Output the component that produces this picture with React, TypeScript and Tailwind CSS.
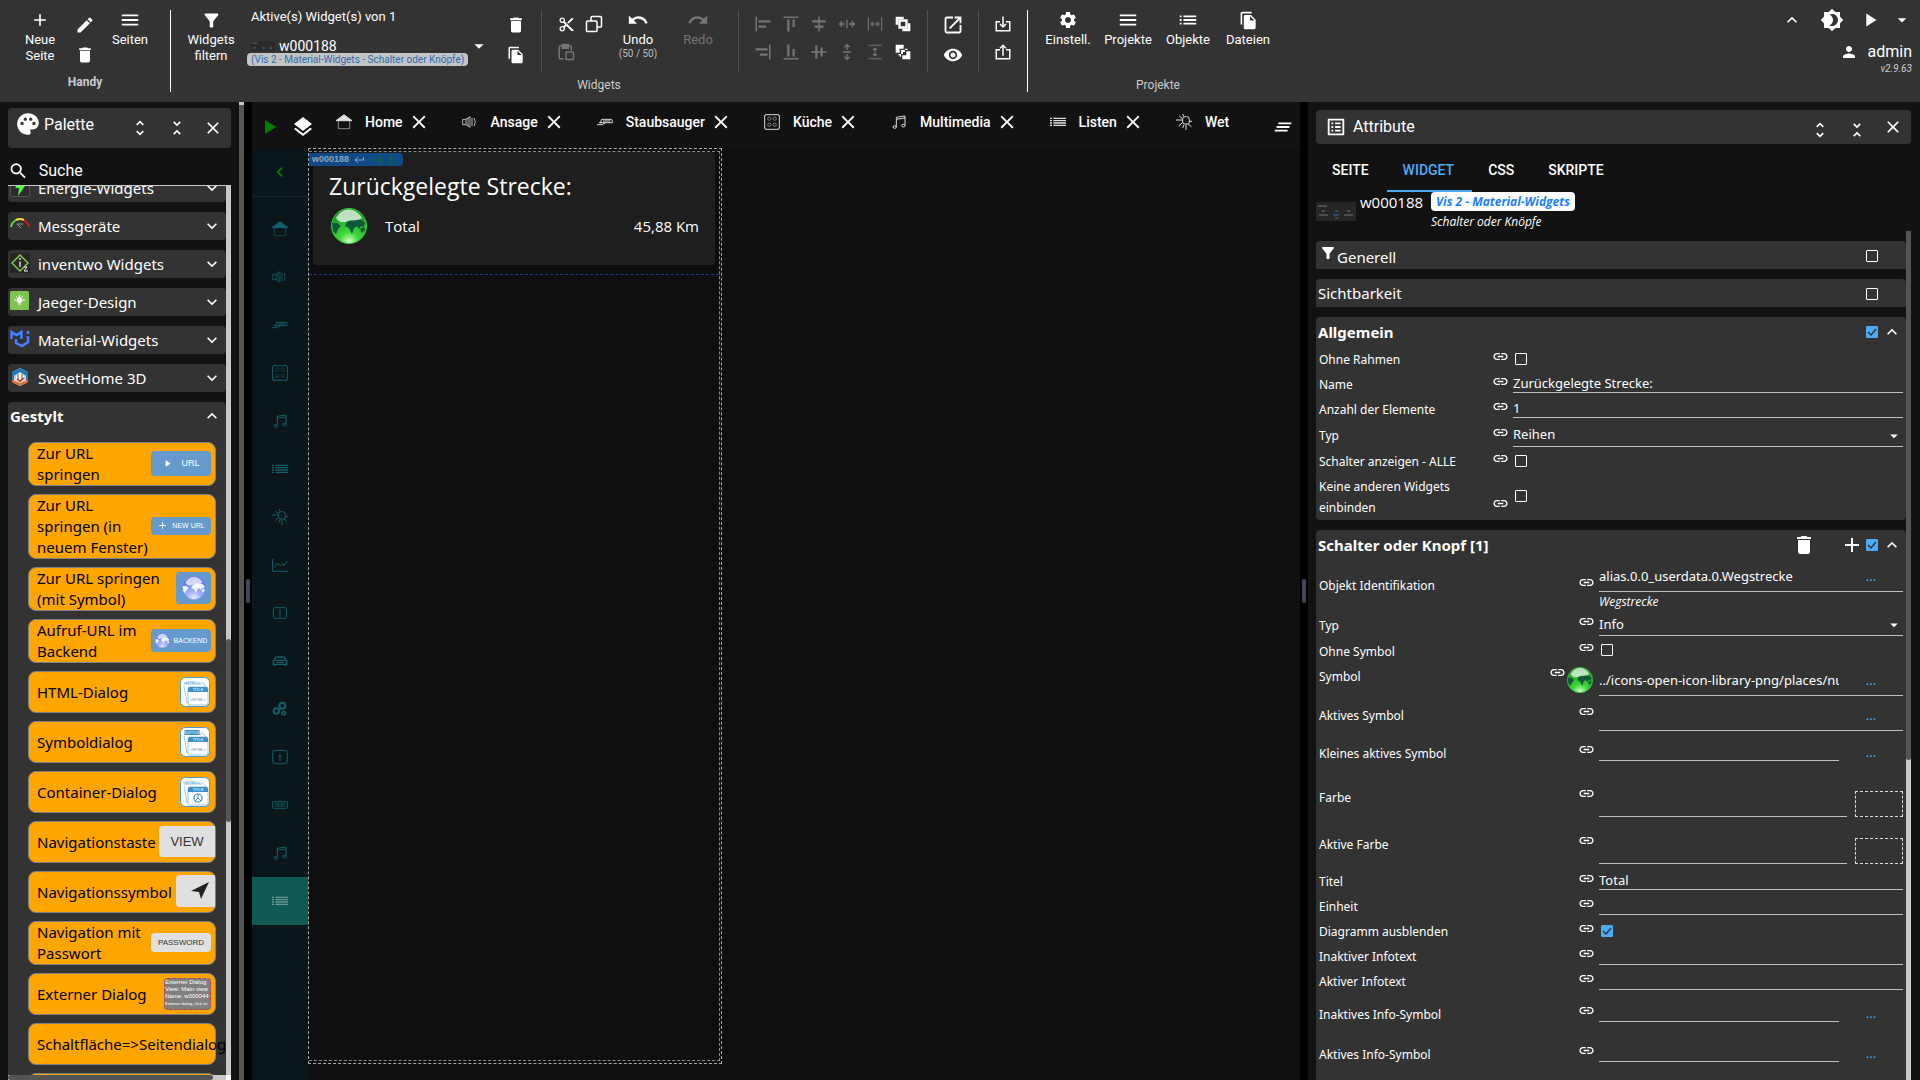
import { useId, type ReactNode } from "react";
import clsx from "clsx";
import {
  MdAdd,
  MdAlignHorizontalCenter,
  MdAlignHorizontalLeft,
  MdAlignHorizontalRight,
  MdAlignVerticalBottom,
  MdAlignVerticalCenter,
  MdAlignVerticalTop,
  MdArrowDropDown,
  MdBrightness4,
  MdClearAll,
  MdClose,
  MdContentCut,
  MdDelete,
  MdEdit,
  MdExpandLess,
  MdExpandMore,
  MdFileCopy,
  MdFilterAlt,
  MdLayers,
  MdLink,
  MdList,
  MdListAlt,
  MdMenu,
  MdNavigateBefore,
  MdPalette,
  MdPerson,
  MdPlayArrow,
  MdRedo,
  MdSearch,
  MdSettings,
  MdUndo,
  MdUnfoldLess,
  MdUnfoldMore,
  MdVisibility,
} from "react-icons/md";

/* ---------- Icons ---------- */

type LineIconProps = { children: ReactNode; size?: number; width?: number };

function LineIcon({ children, size = 18, width = 2 }: LineIconProps) {
  return (
    <svg width={size} height={size} viewBox="0 0 24 24" fill="none" stroke="currentColor" strokeWidth={width}>
      {children}
    </svg>
  );
}

const CopyIcon = () => (
  <LineIcon>
    <path d="M8 8V3.5A1.5 1.5 0 0 1 9.500 2H20.500A1.500 1.500 0 0 1 22 3.500V14.500A1.500 1.500 0 0 1 20.500 16H16" />
    <rect x="2" y="8" width="14" height="14" rx="1.500" />
  </LineIcon>
);

const PasteIcon = () => (
  <LineIcon>
    <path d="M9 21H4a1 1 0 0 1-1-1V5a1 1 0 0 1 1-1h14a1 1 0 0 1 1 1v5" />
    <path d="M7 2h8v5H7z" fill="currentColor" />
    <rect x="12" y="12" width="10" height="10" rx="1" />
  </LineIcon>
);

const SpreadHIcon = () => (
  <LineIcon size={16}>
    <path d="M9 12H2M15 12h7M5 8l-4 4 4 4M19 8l4 4-4 4M12 6v12" />
  </LineIcon>
);

const SpreadVIcon = () => (
  <LineIcon size={16}>
    <path d="M12 9V2M12 15v7M8 5l4-4 4 4M8 19l4 4 4-4M6 12h12" />
  </LineIcon>
);

const WidthIcon = () => (
  <LineIcon size={16} width={1.6}>
    <path d="M2 2v20M22 2v20M6 12h12M9 9l-3 3 3 3M15 9l3 3-3 3" />
  </LineIcon>
);

const HeightIcon = () => (
  <LineIcon size={16} width={1.6}>
    <path d="M2 2h20M2 22h20M12 6v12M9 9l3-3 3 3M9 15l3 3 3-3" />
  </LineIcon>
);

const FrontIcon = () => (
  <svg width="16" height="16" viewBox="0 0 24 24" fill="currentColor">
    <path d="M1 1h12v4H5v8H1zM23 23H11v-4h8v-8h4z" />
    <path d="M5 5h14v14H5zM8.500 8.500v7h7v-7z" fillRule="evenodd" />
  </svg>
);

const BackIcon = () => (
  <svg width="16" height="16" viewBox="0 0 24 24" fill="currentColor">
    <path d="M1 1h12v6H7v6H1zM23 23H11v-6h6v-6h6z" />
    <path d="M15 7h4v2h-4zM5 15h4v4H7v-2H5zM9 9h6v3h-3v3H9z" />
  </svg>
);

const OpenIcon = () => (
  <LineIcon size={20} width={2.2}>
    <path d="M12 3H4.500A1.500 1.500 0 0 0 3 4.500v15A1.500 1.500 0 0 0 4.500 21h15a1.500 1.500 0 0 0 1.500-1.500V12" />
    <path d="M14 3h7v7M21 3 8 16" />
  </LineIcon>
);

const ImportIcon = () => (
  <LineIcon>
    <path d="M8 9H3v12h18V9h-5M12 2v14M8 12l4 4 4-4" />
  </LineIcon>
);

const ExportIcon = () => (
  <LineIcon>
    <path d="M8 9H3v12h18V9h-5M12 17V3M8 7l4-4 4 4" />
  </LineIcon>
);

type GlyphName =
  | "home"
  | "speaker"
  | "vacuum"
  | "stove"
  | "music"
  | "list"
  | "weather"
  | "chart"
  | "window"
  | "car"
  | "gears"
  | "alert"
  | "cassette";

const glyphs: Record<GlyphName, ReactNode> = {
  home: (
    <>
      <path d="M0 10 12 1l12 9z" fill="currentColor" stroke="currentColor" />
      <path d="M3.500 10v12h17V10" opacity="0.600" />
    </>
  ),
  speaker: (
    <>
      <path d="M1 8h5v8H1zM6 8l6-4v16l-6-4M9 6v12" opacity="0.800" />
      <path d="M15 6v12M18 6q4 6 0 12" opacity="0.800" />
    </>
  ),
  vacuum: (
    <>
      <path d="M7 8h14q2 0 2 3v2H5zM0 16h8l5-3M3 13h5" />
      <path d="M9 10.500h11" />
    </>
  ),
  stove: (
    <>
      <rect x="1" y="1" width="22" height="22" rx="2" />
      <circle cx="8" cy="7" r="2.500" opacity="0.500" />
      <circle cx="16" cy="7" r="2.500" opacity="0.500" />
      <circle cx="8" cy="16" r="2.500" opacity="0.500" />
      <circle cx="16" cy="16" r="2.500" opacity="0.500" />
    </>
  ),
  music: (
    <>
      <path d="M8 19V5l13-2v14M8 8l13-2" />
      <ellipse cx="5.500" cy="19.500" rx="2.500" ry="2" />
      <ellipse cx="18.500" cy="17.500" rx="2.500" ry="2" />
    </>
  ),
  list: (
    <>
      <path d="M0 6.500h3M5 6.500h19M0 10h3M5 10h19M0 13.500h3M5 13.500h19M0 17h3M5 17h19" strokeWidth="2" />
    </>
  ),
  weather: (
    <>
      <path d="M10 7q0-3 4-3h2q4 0 4 4v4q0 3-3 3h-4q-3 0-3-3z" />
      <path d="M0 9h9M5 3l5 4M4 18l6-5M10 21l2-5M15 16v8M18 15l5 4M20 11h4M10 0l2 4" />
    </>
  ),
  chart: (
    <>
      <path d="M1 3v18.500h23M3 16l5-6 5 3 3-3 2 3 5-7" />
    </>
  ),
  window: (
    <>
      <rect x="2" y="4" width="20" height="16" rx="3" />
      <path d="M12 6v12" />
    </>
  ),
  car: (
    <>
      <path d="m3 11 3-5h12l3 5M2 11h20v6H2zM4 17v3M20 17v3M7 14h10" strokeWidth="2" />
    </>
  ),
  gears: (
    <>
      <circle cx="15.500" cy="7" r="4.500" strokeWidth="3" />
      <circle cx="6.500" cy="15" r="4" strokeWidth="3" />
      <circle cx="17.500" cy="18.500" r="2.500" strokeWidth="2.500" />
    </>
  ),
  alert: (
    <>
      <rect x="1" y="2" width="22" height="20" rx="4" />
      <path d="M12 8v5M12 15v2.500" strokeWidth="2.500" />
    </>
  ),
  cassette: (
    <>
      <rect x="1" y="7" width="22" height="10" rx="1" />
      <path d="M5 10h14v4H5z" opacity="0.600" />
      <path d="M8 12h2M14 12h2" strokeWidth="3" />
    </>
  ),
};

function Glyph({ name }: { name: GlyphName }) {
  return (
    <LineIcon size={16} width={1.5}>
      {glyphs[name]}
    </LineIcon>
  );
}

function Globe({ size, tone }: { size: number; tone: "green" | "blue" }) {
  const id = useId();
  const green = tone === "green";
  return (
    <svg width={size} height={size} viewBox="0 0 36 36" className="shrink-0">
      <defs>
        <radialGradient id={id} cx="50%" cy="95%" r="80%">
          <stop offset="0" stopColor={green ? "#d8ffc8" : "#eaf0ff"} />
          <stop offset="0.35" stopColor={green ? "#3fd63a" : "#a9b8ff"} />
          <stop offset="1" stopColor={green ? "#1f9a2c" : "#5a6ff0"} />
        </radialGradient>
      </defs>
      <circle cx="18" cy="18" r="17.500" fill={`url(#${id})`} stroke={green ? "#2fd02f" : "#7f95e8"} />
      <path
        d="M1 15l5 0 4 3-3 3-2 5-3-3zM16 14l5-3 9 1 4 3-2 4-2-1-2 3-2-3-3 2-2 6-3-6-4-2zM29 21l4-2 1 3-3 3z"
        fill={green ? "#0d5a3a" : "#f3f7ff"}
      />
      <path d="M5 10C9 3 14 1.500 18 1.500S28 4 31 10c-6 4-12 1-17 4-4 1-7-1-9-4z" fill="#fff" opacity="0.700" />
    </svg>
  );
}

/* ---------- Toolbar ---------- */

type ToolProps = { label: string; icon: ReactNode; children?: ReactNode; className?: string; disabled?: boolean };

function ToolButton({ label, icon, children, className, disabled }: ToolProps) {
  return (
    <button
      disabled={disabled}
      className={clsx("flex flex-col items-center self-start pt-2 text-[13px] leading-4 disabled:text-[#757575]", className)}
    >
      <span className="flex h-6 items-center">{icon}</span>
      <span>{label}</span>
      {children}
    </button>
  );
}

function IconButton({ label, children, className, disabled }: { label: string; children: ReactNode; className?: string; disabled?: boolean }) {
  return (
    <button aria-label={label} disabled={disabled} className={clsx("flex items-center justify-center disabled:text-[#757575]", className)}>
      {children}
    </button>
  );
}

const ThinDivider = () => <div className="mx-[10px] mt-[10px] h-[62px] w-px bg-[#505050]" />;
const StrongDivider = () => <div className="mt-[10px] h-[82px] w-px bg-white" />;

const alignTools = [
  { label: "Links ausrichten", icon: <MdAlignHorizontalLeft size={18} /> },
  { label: "Oben ausrichten", icon: <MdAlignVerticalTop size={18} /> },
  { label: "Horizontal zentrieren", icon: <MdAlignHorizontalCenter size={18} /> },
  { label: "Horizontal verteilen", icon: <SpreadHIcon /> },
  { label: "Gleiche Breite", icon: <WidthIcon /> },
  { label: "Nach vorne", icon: <FrontIcon />, active: true },
  { label: "Rechts ausrichten", icon: <MdAlignHorizontalRight size={18} /> },
  { label: "Unten ausrichten", icon: <MdAlignVerticalBottom size={18} /> },
  { label: "Vertikal zentrieren", icon: <MdAlignVerticalCenter size={18} /> },
  { label: "Vertikal verteilen", icon: <SpreadVIcon /> },
  { label: "Gleiche Höhe", icon: <HeightIcon /> },
  { label: "Nach hinten", icon: <BackIcon />, active: true },
];

function Toolbar() {
  return (
    <header className="flex h-[102px] shrink-0 bg-[#333333]">
      {/* View actions */}
      <div className="flex flex-col px-[14px]">
        <div className="flex h-[74px]">
          <ToolButton label="Neue" icon={<MdAdd size={20} />} className="w-[52px]">
            <span>Seite</span>
          </ToolButton>
          <div className="flex w-[38px] flex-col pt-[10px]">
            <IconButton label="Bearbeiten" className="h-[30px]"><MdEdit size={20} /></IconButton>
            <IconButton label="Löschen" className="h-[30px]"><MdDelete size={20} /></IconButton>
          </div>
          <ToolButton label="Seiten" icon={<MdMenu size={22} />} className="w-[52px]" />
        </div>
        <span className="text-center text-xs font-bold text-[#cccccc]">Handy</span>
      </div>
      <StrongDivider />

      {/* Widget actions */}
      <div className="flex flex-col">
        <div className="flex h-[77px]">
          <ToolButton label="Widgets" icon={<MdFilterAlt size={21} />} className="ml-[6px] w-[68px]">
            <span>filtern</span>
          </ToolButton>
          <div className="flex w-[246px] flex-col items-start pt-[9px]">
            <span className="ml-[6px] text-[13px] leading-4">Aktive(s) Widget(s) von 1</span>
            <button className="mt-[14px] flex w-full flex-col items-start">
              <span className="ml-[6px] flex h-[14px] w-[239px] items-center gap-1 text-sm">
                <svg width="24" height="10" viewBox="0 0 24 10">
                  <rect width="24" height="10" fill="#2a2a2a" />
                  <path d="M1 2h5M2 7h3M18 7h3" stroke="#666" />
                  <path d="M11 7h3" stroke="#3c6f9f" />
                </svg>
                <span>w000188</span>
                <MdArrowDropDown size={22} className="ml-auto" />
              </span>
              <span className="ml-[2px] rounded bg-[#c4c4c4] px-1 text-[10px] leading-[13px] text-[#2c6db3]">
                (Vis 2 - Material-Widgets - Schalter oder Knöpfe)
              </span>
            </button>
          </div>
          <div className="ml-[9px] flex w-[31px] flex-col pt-[10px]">
            <IconButton label="Widget löschen" className="h-[30px]"><MdDelete size={20} /></IconButton>
            <IconButton label="Widget klonen" className="h-[30px]"><MdFileCopy size={18} /></IconButton>
          </div>
          <ThinDivider />
          <div className="grid grid-cols-2 grid-rows-[28px_28px] pt-[10px]">
            <IconButton label="Ausschneiden" className="w-7"><MdContentCut size={17} /></IconButton>
            <IconButton label="Kopieren" className="w-7"><CopyIcon /></IconButton>
            <IconButton label="Einfügen" className="w-7" disabled><PasteIcon /></IconButton>
          </div>
          <ToolButton label="Undo" icon={<MdUndo size={22} />} className="w-[60px]">
            <span className="text-[10px] leading-3 text-[#bbbbbb]">(50 / 50)</span>
          </ToolButton>
          <ToolButton label="Redo" icon={<MdRedo size={22} />} className="w-[60px]" disabled />
          <ThinDivider />
          <div className="grid grid-cols-[repeat(6,28px)] grid-rows-[28px_28px] pt-[10px]">
            {alignTools.map((tool) => (
              <IconButton key={tool.label} label={tool.label} disabled={!tool.active}>
                {tool.icon}
              </IconButton>
            ))}
          </div>
          <ThinDivider />
          <div className="flex w-[30px] flex-col pt-[10px]">
            <IconButton label="In neuem Fenster öffnen" className="h-[30px]"><OpenIcon /></IconButton>
            <IconButton label="Anzeigen" className="h-[30px]"><MdVisibility size={20} /></IconButton>
          </div>
          <ThinDivider />
          <div className="mr-[10px] flex w-7 flex-col pt-[10px]">
            <IconButton label="Importieren" className="h-7"><ImportIcon /></IconButton>
            <IconButton label="Exportieren" className="h-7"><ExportIcon /></IconButton>
          </div>
        </div>
        <span className="text-center text-xs text-[#cccccc]">Widgets</span>
      </div>
      <StrongDivider />

      {/* Project actions */}
      <div className="flex flex-col px-[10px]">
        <div className="flex h-[77px]">
          <ToolButton label="Einstell." icon={<MdSettings size={20} />} className="w-[60px]" />
          <ToolButton label="Projekte" icon={<MdMenu size={22} />} className="w-[60px]" />
          <ToolButton label="Objekte" icon={<MdList size={22} />} className="w-[60px]" />
          <ToolButton label="Dateien" icon={<MdFileCopy size={19} />} className="w-[60px]" />
        </div>
        <span className="text-center text-xs text-[#cccccc]">Projekte</span>
      </div>

      {/* User */}
      <div className="ml-auto flex flex-col items-end pt-2 pr-1">
        <div className="flex h-6 items-center">
          <IconButton label="Einklappen" className="w-10"><MdExpandLess size={20} /></IconButton>
          <IconButton label="Farbschema" className="w-10"><MdBrightness4 size={24} /></IconButton>
          <IconButton label="Starten" className="w-9"><MdPlayArrow size={22} /></IconButton>
          <IconButton label="Mehr" className="w-7"><MdArrowDropDown size={20} /></IconButton>
        </div>
        <div className="mt-[9px] mr-1 flex items-center gap-[10px] leading-[22px]">
          <MdPerson size={18} />
          <span>admin</span>
        </div>
        <span className="mr-1 text-[10px] leading-3 italic text-[#cccccc]">v2.9.63</span>
      </div>
    </header>
  );
}

/* ---------- Palette ---------- */

const groups: { name: string; icon: ReactNode }[] = [
  {
    name: "Energie-Widgets",
    icon: (
      <>
        <rect x="0.500" y="0.500" width="19" height="19" rx="2" fill="#2b2b2b" stroke="#555" />
        <path d="M12 1 5 11h4l-1 8 7-10h-4z" fill="#4dff3a" />
      </>
    ),
  },
  {
    name: "Messgeräte",
    icon: (
      <>
        <path d="M1 12A10 10 0 0 1 6 5" stroke="#5fe03a" strokeWidth="2" fill="none" />
        <path d="M6 5a9 9 0 0 1 8 0" stroke="#f0e03a" strokeWidth="2" fill="none" />
        <path d="M14 5a10 10 0 0 1 5 7" stroke="#d02020" strokeWidth="2" fill="none" />
        <path d="m7 9 4 4M7 9h6" stroke="#999" fill="none" />
      </>
    ),
  },
  {
    name: "inventwo Widgets",
    icon: (
      <>
        <rect width="20" height="20" rx="1" fill="#272727" />
        <path d="m10 2 8 8-8 8-8-8z" stroke="#7ec850" strokeWidth="1.500" fill="none" />
        <path d="M10 5v2M10 8.500V14" stroke="#ddd" strokeWidth="1.500" />
        <path d="M14 14h3l-3 4h4" stroke="#eee" fill="none" />
      </>
    ),
  },
  {
    name: "Jaeger-Design",
    icon: (
      <>
        <rect width="19" height="19" rx="1.500" fill="#7ec352" />
        <circle cx="9.500" cy="9" r="3" fill="#fff" />
        <path d="M9.500 4v2M4 9h2M13 9h2M6 5l1 1M13 5l-1 1M8 13h3" stroke="#fff" />
      </>
    ),
  },
  {
    name: "Material-Widgets",
    icon: <path d="M1.500 10V3l5 3 5-3v7M6 10v4l6 3 6-4V7M18 2v3" stroke="#4a7dff" strokeWidth="2.500" fill="none" />,
  },
  {
    name: "SweetHome 3D",
    icon: (
      <>
        <path d="m10 1 8 4v10l-8 4-8-4V5z" fill="#d8d0c8" />
        <path d="m10 1 8 4v5l-8-5-8 5V5z" fill="#2378b8" />
        <path d="m2 5 2 1v8l-2-1zM18 5l-2 1v8l2-1z" fill="#2378b8" />
        <path d="m2 13 8 3 8-3v2l-8 4-8-4z" fill="#d8743a" />
        <path d="m6 9 4-3 4 3v4H6z" fill="#fff" />
        <path d="M8 7v5M12 7v5" stroke="#555" />
        <path d="m7 12 3 2 4-3" stroke="#d02828" strokeWidth="1.500" fill="none" />
      </>
    ),
  },
];

function DialogPreview({ kind }: { kind: "html" | "button" | "container" }) {
  return (
    <svg width="30" height="30" viewBox="0 0 30 30" className="mr-[5px] shrink-0 font-['Liberation_Sans',sans-serif]">
      <rect x="0.500" y="0.500" width="29" height="29" rx="5" fill="#fff" stroke="#4a9ccb" />
      <path d="M4 9l3 17M22 5l5 6M4 7h18" stroke="#7fb8dc" strokeWidth="0.750" fill="none" />
      {kind === "button" ? (
        <>
          <rect x="4" y="3" width="16" height="5" rx="1.500" fill="#3a8fc4" />
          <text x="12" y="7" fontSize="4" fill="#fff" textAnchor="middle">BUTTON</text>
        </>
      ) : (
        <text x="12" y="7" fontSize="4" fill="#3a8fc4" textAnchor="middle">&lt;HTML/&gt;</text>
      )}
      <rect x="8" y="10" width="20" height="18" rx="2" fill="#fff" stroke="#7fb8dc" strokeWidth="0.750" />
      <path d="M8 15v-3q0-2 2-2h16q2 0 2 2v3z" fill="#3a8fc4" />
      <text x="18" y="14" fontSize="4" fill="#fff" textAnchor="middle">TITLE</text>
      {kind === "container" ? (
        <>
          <circle cx="18" cy="21" r="4" fill="none" stroke="#3a8fc4" strokeWidth="1.200" />
          <path d="M18 17v4l-3 3M18 21l3 3" stroke="#3a8fc4" fill="none" />
        </>
      ) : (
        <text x="18" y="24" fontSize="4" fill="#3a8fc4" textAnchor="middle">&lt;HTML&gt;</text>
      )}
    </svg>
  );
}

const blueChip = "mr-1 mb-[2px] flex shrink-0 items-center justify-center gap-1 rounded bg-[#6699cc] font-['Liberation_Sans',sans-serif] text-white";
const greyChip = "mb-[2px] flex shrink-0 items-center justify-center bg-[#e0e0e0] font-['Liberation_Sans',sans-serif] text-[#333333]";

const widgets: { name: string; height: string; preview?: ReactNode }[] = [
  {
    name: "Zur URL springen",
    height: "h-11",
    preview: (
      <span className={clsx(blueChip, "h-[25px] w-[60px] text-[9px]")}>
        <MdPlayArrow size={11} />
        <span className="ml-1">URL</span>
      </span>
    ),
  },
  {
    name: "Zur URL springen (in neuem Fenster)",
    height: "h-[65px]",
    preview: (
      <span className={clsx(blueChip, "h-[18px] w-[60px] text-[7px]")}>
        <MdAdd size={11} />
        <span>NEW URL</span>
      </span>
    ),
  },
  {
    name: "Zur URL springen (mit Symbol)",
    height: "h-11",
    preview: <span className={clsx(blueChip, "h-8 w-[35px]")}><Globe size={24} tone="blue" /></span>,
  },
  {
    name: "Aufruf-URL im Backend",
    height: "h-11",
    preview: (
      <span className={clsx(blueChip, "h-[23px] w-[60px] text-[7px]")}>
        <Globe size={15} tone="blue" />
        <span>BACKEND</span>
      </span>
    ),
  },
  { name: "HTML-Dialog", height: "h-[42px]", preview: <DialogPreview kind="html" /> },
  { name: "Symboldialog", height: "h-[42px]", preview: <DialogPreview kind="button" /> },
  { name: "Container-Dialog", height: "h-[42px]", preview: <DialogPreview kind="container" /> },
  {
    name: "Navigationstaste",
    height: "h-[42px]",
    preview: <span className={clsx(greyChip, "h-[31px] w-14 rounded-l text-[13px]")}>VIEW</span>,
  },
  {
    name: "Navigationssymbol",
    height: "h-[42px]",
    preview: (
      <span className={clsx(greyChip, "h-8 w-[39px] rounded-l")}>
        <svg width="18" height="18" viewBox="0 0 18 18" className="ml-2">
          <path d="M18 0 10 17l-2-7-8-1z" fill="#222" />
        </svg>
      </span>
    ),
  },
  {
    name: "Navigation mit Passwort",
    height: "h-11",
    preview: <span className={clsx(greyChip, "mr-1 h-[19px] w-[60px] rounded text-[8px]")}>PASSWORD</span>,
  },
  {
    name: "Externer Dialog",
    height: "h-[42px]",
    preview: (
      <span className="mr-1 flex h-8 w-[47px] shrink-0 flex-col overflow-hidden rounded-sm border border-dashed border-[#c04050] bg-[#808080] font-['Liberation_Sans',sans-serif] text-[6px] leading-[7px] whitespace-nowrap text-white">
        <span>Externer Dialog</span>
        <span>View: Main view</span>
        <span>Name: w000044</span>
        <span className="text-[4px]">Externer dialog, click on</span>
      </span>
    ),
  },
  { name: "Schaltfläche=>Seitendialog", height: "h-[42px]" },
  { name: "", height: "h-[42px]" },
];

function Palette() {
  return (
    <aside className="flex w-[244px] shrink-0">
      <div className="flex min-w-0 flex-1 flex-col pt-[6px] pl-2">
        <div className="mr-2 flex h-10 shrink-0 items-center rounded-sm bg-[#333333] pl-[7px]">
          <MdPalette size={26} className="mb-2 shrink-0" />
          <h2 className="mb-[6px] ml-[3px] flex-1">Palette</h2>
          <IconButton label="Alle aufklappen" className="w-[37px]"><MdUnfoldMore size={20} /></IconButton>
          <IconButton label="Alle zuklappen" className="w-[37px]"><MdUnfoldLess size={20} /></IconButton>
          <IconButton label="Schließen" className="w-9"><MdClose size={20} /></IconButton>
        </div>
        <div className="mr-2 mt-2 flex h-[30px] shrink-0 items-center gap-[10px] border-b border-[#c8c8c8] pb-[2px]">
          <MdSearch size={24} className="mt-[3px]" />
          <input aria-label="Suche" placeholder="Suche" className="w-full min-w-0 pt-[3px] outline-none placeholder:text-white" />
        </div>

        <div className="flex min-h-0 flex-1 pr-2">
          <div className="flex min-w-0 flex-1 flex-col overflow-hidden">
            <div className="-mt-3 flex flex-col gap-[10px] font-['Noto_Sans',sans-serif] text-[15px]">
              {groups.map((group) => (
                <button key={group.name} className="flex h-7 items-center rounded bg-[#333333] pl-[2px] text-left">
                  <svg width="20" height="20" viewBox="0 0 20 20" className="mb-[2px]">
                    {group.icon}
                  </svg>
                  <span className="ml-2 flex-1">{group.name}</span>
                  <MdExpandMore size={20} className="mr-1" />
                </button>
              ))}
              <div className="rounded-t bg-[#333333]">
                <button className="flex h-7 w-full items-center pl-[2px] text-left font-bold">
                  <span className="flex-1">Gestylt</span>
                  <MdExpandLess size={20} className="mr-1" />
                </button>
                <ul className="mt-3 mr-[10px] ml-5 flex flex-col gap-2">
                  {widgets.map((widget, idx) => (
                    <li
                      key={idx}
                      className={clsx(
                        "flex items-center rounded-lg border border-[#808080] bg-[#ffa500] pl-2 leading-[21px] text-black",
                        widget.height,
                      )}
                    >
                      <span className={clsx("flex-1", !widget.name.includes(" ") && "whitespace-nowrap")}>{widget.name}</span>
                      {widget.preview}
                    </li>
                  ))}
                </ul>
              </div>
            </div>
          </div>
          <div className="w-[5px] bg-[#c8c8c8]">
            <div className="mt-[453px] h-[183px] rounded-sm bg-[#545454]" />
          </div>
        </div>
        <div className="mr-2 flex h-[5px] shrink-0 bg-[#c8c8c8]">
          <div className="w-[205px] rounded-sm bg-[#545454]" />
          <div className="ml-auto w-[5px] bg-white" />
        </div>
      </div>
      <div className="w-[5px] bg-[#545454]">
        <div className="h-[3px] bg-[#c8c8c8]" />
      </div>
    </aside>
  );
}

const Splitter = () => (
  <div className="flex w-2 shrink-0 items-center justify-center bg-black">
    <div className="h-6 w-1 rounded-sm bg-[#44445a]" />
  </div>
);

/* ---------- Editor ---------- */

const pages: { name: string; icon: GlyphName }[] = [
  { name: "Home", icon: "home" },
  { name: "Ansage", icon: "speaker" },
  { name: "Staubsauger", icon: "vacuum" },
  { name: "Küche", icon: "stove" },
  { name: "Multimedia", icon: "music" },
  { name: "Listen", icon: "list" },
];

const menu: GlyphName[] = [
  "home",
  "speaker",
  "vacuum",
  "stove",
  "music",
  "list",
  "weather",
  "chart",
  "window",
  "car",
  "gears",
  "alert",
  "cassette",
  "music",
  "list",
];

function Editor() {
  return (
    <main className="flex min-w-0 flex-1 flex-col">
      <div className="flex h-[46px] shrink-0 items-center overflow-hidden text-sm">
        <IconButton label="Vorschau" className="ml-[11px] text-[#008000]">
          <svg width="11" height="14" viewBox="0 0 11 14" className="mt-1 ml-[2px]">
            <path d="M0 0v14l11-7z" fill="currentColor" />
          </svg>
        </IconButton>
        <IconButton label="Ebenen" className="ml-[15px]"><MdLayers size={24} className="mt-1" /></IconButton>
        <nav className="ml-[17px] flex flex-1 items-center overflow-hidden pb-[6px]">
          {pages.map((page) => (
            <div key={page.name} className="flex shrink-0 items-center">
              <button className="flex items-center gap-[9px] font-medium">
                <span className="flex w-6 justify-center text-[#dddddd]"><Glyph name={page.icon} /></span>
                {page.name}
              </button>
              <IconButton label={`${page.name} schließen`} className="mr-[28px] ml-[5px]"><MdClose size={22} /></IconButton>
            </div>
          ))}
          <button className="flex items-center gap-[9px] font-medium">
            <span className="flex w-6 justify-center text-[#dddddd]"><Glyph name="weather" /></span>
            Wet
          </button>
        </nav>
        <IconButton label="Alle Seiten" className="mr-[6px] ml-3"><MdClearAll size={22} className="mt-1" /></IconButton>
      </div>

      <div className="flex min-h-0 flex-1 bg-[#0f0f12]">
        {/* Page menu */}
        <nav className="flex w-14 shrink-0 flex-col bg-[#0b161b] text-[#10606c]">
          <IconButton label="Menü schließen" className="mb-2 h-[49px] border-b border-[#15262c] text-[#008000]">
            <MdNavigateBefore size={20} />
          </IconButton>
          {menu.map((icon, idx) => (
            <button
              key={idx}
              className={clsx(
                "flex h-12 shrink-0 items-center justify-center",
                idx === menu.length - 1 && "bg-[#0f5a55] text-[#6f9391]",
              )}
            >
              <Glyph name={icon} />
            </button>
          ))}
        </nav>

        {/* Canvas */}
        <div className="mb-4 w-[414px] border border-dashed border-[#a8a8a8] pt-[2px] pr-px pb-[2px] font-['Open_Sans',sans-serif]">
          <div className="h-full border border-l-0 border-dashed border-[#8a8a8a]">
            <div className="relative h-[123px] border-b border-dashed border-[#164080] px-1">
              <div className="h-[113px] rounded bg-[#1e1e1e] px-4 pt-4 shadow-md">
                <h1 className="text-[23px] leading-9">Zurückgelegte Strecke:</h1>
                <div className="mt-1 flex items-center">
                  <span className="ml-[2px]"><Globe size={36} tone="green" /></span>
                  <span className="ml-[18px] flex-1 text-[15px]">Total</span>
                  <span className="text-[15px]">45,88 Km</span>
                </div>
              </div>
              <div className="absolute top-px left-0 flex h-[13px] w-[94px] items-center gap-[5px] rounded-r-sm bg-[#0f4a86] pl-[3px] font-['Liberation_Sans',sans-serif] text-[9px] font-bold text-[#8fa3b8]">
                w000188
                <svg width="10" height="8" viewBox="0 0 10 8" fill="none" stroke="currentColor">
                  <path d="M9.500 1v3H1M4 1 1 4l3 3" />
                </svg>
                <svg width="12" height="10" viewBox="0 0 12 10" fill="none" stroke="#13653f">
                  <path d="M.5 0v10M11.500 0v10M2 5h8M4 3 2 5l2 2M8 3l2 2-2 2" />
                </svg>
                <svg width="10" height="10" viewBox="0 0 10 10" fill="none" stroke="#13653f">
                  <path d="M5 2.500V9M3 4h4M.5 6Q1 9.500 5 9.500T9.500 6" />
                  <circle cx="5" cy="1.500" r="1" />
                </svg>
              </div>
            </div>
          </div>
        </div>
      </div>
    </main>
  );
}

/* ---------- Attributes ---------- */

function CheckBox({ label, id, checked = false }: { label?: string; id?: string; checked?: boolean }) {
  return (
    <span className="grid h-3 w-3 shrink-0 place-items-center">
      <input
        id={id}
        type="checkbox"
        aria-label={label}
        defaultChecked={checked}
        className="peer col-start-1 row-start-1 h-3 w-3 appearance-none rounded-[1px] border border-white checked:border-[#4dabf5] checked:bg-[#4dabf5]"
      />
      <svg
        width="10"
        height="8"
        viewBox="0 0 10 8"
        className="pointer-events-none col-start-1 row-start-1 hidden peer-checked:block"
      >
        <path d="M1 4l3 3 5-6" fill="none" stroke="#333" strokeWidth="1.400" />
      </svg>
    </span>
  );
}

type Field = {
  label: string;
  kind: "check" | "text" | "select" | "object" | "image" | "picker" | "color";
  height: string;
  value?: string;
  checked?: boolean;
  hint?: string;
};

const general: Field[] = [
  { label: "Ohne Rahmen", kind: "check", height: "h-[25px]" },
  { label: "Name", kind: "text", height: "h-[25px]", value: "Zurückgelegte Strecke:" },
  { label: "Anzahl der Elemente", kind: "text", height: "h-[25px]", value: "1" },
  { label: "Typ", kind: "select", height: "h-[27px]", value: "Reihen" },
  { label: "Schalter anzeigen - ALLE", kind: "check", height: "h-[25px]" },
  { label: "Keine anderen Widgets einbinden", kind: "check", height: "h-[46px]" },
];

const button: Field[] = [
  { label: "Objekt Identifikation", kind: "object", height: "h-[51px]", value: "alias.0.0_userdata.0.Wegstrecke", hint: "Wegstrecke" },
  { label: "Typ", kind: "select", height: "h-[28px]", value: "Info" },
  { label: "Ohne Symbol", kind: "check", height: "h-[24px]" },
  { label: "Symbol", kind: "image", height: "h-[34px]", value: "../icons-open-icon-library-png/places/nuvola/world.png" },
  { label: "Aktives Symbol", kind: "object", height: "h-[36px]" },
  { label: "Kleines aktives Symbol", kind: "picker", height: "h-[40px]" },
  { label: "Farbe", kind: "color", height: "h-[48px]" },
  { label: "Aktive Farbe", kind: "color", height: "mb-[2px] h-[46px]" },
  { label: "Titel", kind: "text", height: "h-[25px]", value: "Total" },
  { label: "Einheit", kind: "text", height: "h-[25px]" },
  { label: "Diagramm ausblenden", kind: "check", height: "h-[25px]", checked: true },
  { label: "Inaktiver Infotext", kind: "text", height: "h-[25px]" },
  { label: "Aktiver Infotext", kind: "text", height: "h-[25px]" },
  { label: "Inaktives Info-Symbol", kind: "picker", height: "h-[40px]" },
  { label: "Aktives Info-Symbol", kind: "picker", height: "h-[40px]" },
];

const MoreButton = ({ label }: { label: string }) => (
  <button aria-label={`${label} auswählen`} className="w-16 shrink-0 text-center text-[#4dabf5]">
    ...
  </button>
);

function FieldControl({ field, id }: { field: Field; id: string }) {
  switch (field.kind) {
    case "check":
      return <span className="ml-[2px] flex pb-[2px]"><CheckBox id={id} checked={field.checked} /></span>;
    case "select":
      return (
        <span className="relative block">
          <select id={id} className="h-[22px] w-full appearance-none border-b border-[#c0c0c0] outline-none">
            <option>{field.value}</option>
          </select>
          <MdArrowDropDown size={18} className="pointer-events-none absolute top-[2px] right-0" />
        </span>
      );
    case "object":
    case "image":
      return (
        <span className="block">
          <span className="flex h-8 items-center border-b border-[#c0c0c0] pt-[2px]">
            <input id={id} defaultValue={field.value} className="min-w-0 flex-1 outline-none" />
            <MoreButton label={field.label} />
          </span>
          {field.hint && <span className="block h-[19px] font-['Open_Sans',sans-serif] text-xs leading-5 italic">{field.hint}</span>}
        </span>
      );
    case "picker":
      return (
        <span className="flex items-center">
          <input id={id} defaultValue={field.value} className="h-4 min-w-0 flex-1 border-b border-[#c0c0c0] outline-none" />
          <MoreButton label={field.label} />
        </span>
      );
    case "color":
      return (
        <span className="flex items-end gap-2 pt-[14px]">
          <input id={id} defaultValue={field.value} className="h-[22px] min-w-0 flex-1 border-b border-[#c0c0c0] outline-none" />
          <button aria-label={`${field.label} wählen`} className="h-[26px] w-12 border border-dashed border-[#dddddd]" />
        </span>
      );
    default:
      return <input id={id} defaultValue={field.value} className="block h-4 w-full border-b border-[#c0c0c0] outline-none" />;
  }
}

function FieldRow({ field, labelWidth }: { field: Field; labelWidth: string }) {
  const id = useId();
  const image = field.kind === "image";
  return (
    <div className={clsx("flex items-center", field.height)}>
      <div className={clsx("flex shrink-0", image ? "items-start self-start pr-[6px]" : "items-center pr-1", labelWidth)}>
        <label
          htmlFor={id}
          className={clsx("max-w-[150px] pl-[3px] font-['Noto_Sans',sans-serif] text-xs leading-[21px]", image && "pt-[3px]")}
        >
          {field.label}
        </label>
        <MdLink
          size={17}
          className={clsx("ml-auto shrink-0", field.label.length > 30 ? "mb-[6px] self-end" : "mb-[7px]", image && "mt-px mr-px")}
        />
        {image && <span className="mt-1"><Globe size={26} tone="green" /></span>}
      </div>
      <div className="min-w-0 flex-1 text-[13px]">
        <FieldControl field={field} id={id} />
      </div>
    </div>
  );
}

function Attributes() {
  return (
    <aside className="flex w-[612px] shrink-0 flex-col pt-2 pr-[9px] pl-2">
      <div className="flex h-[34px] shrink-0 items-center rounded-sm bg-[#333333] pl-[9px]">
        <MdListAlt size={22} className="mb-px" />
        <h2 className="mb-px ml-[6px] flex-1">Attribute</h2>
        <IconButton label="Alle aufklappen" className="w-[37px]"><MdUnfoldMore size={20} className="mt-[6px]" /></IconButton>
        <IconButton label="Alle zuklappen" className="w-[37px]"><MdUnfoldLess size={20} className="mt-[6px]" /></IconButton>
        <IconButton label="Schließen" className="w-9"><MdClose size={20} /></IconButton>
      </div>

      <div role="tablist" className="flex h-12 shrink-0 text-sm font-medium">
        <button role="tab" className="pt-1 pr-[18px] pl-4">SEITE</button>
        <button role="tab" aria-selected className="border-b-2 border-[#4dabf5] pt-[6px] pr-[18px] pl-4 text-[#4dabf5]">WIDGET</button>
        <button role="tab" className="pt-1 pr-[18px] pl-4">CSS</button>
        <button role="tab" className="pt-1 pr-[18px] pl-4">SKRIPTE</button>
      </div>

      <div className="flex h-[39px] shrink-0 items-start font-['Open_Sans',sans-serif]">
        <svg width="40" height="19" viewBox="0 0 40 19" className="mt-[10px]">
          <rect width="40" height="19" fill="#262626" />
          <path d="M2 4h9M6 9h3M31 9h3M3 13h9M28 13h9" stroke="#777" />
          <path d="M19 9h3M17 13h6M19 16h3" stroke="#3c6f9f" />
        </svg>
        <span className="ml-1 w-[71px] text-[15px] leading-5">w000188</span>
        <div className="flex flex-col items-start italic">
          <span className="rounded-sm bg-white px-[5px] text-xs leading-[19px] font-bold text-[#1a80ff]">Vis 2 - Material-Widgets</span>
          <span className="text-xs leading-[22px]">Schalter oder Knöpfe</span>
        </div>
      </div>

      <div className="flex min-h-0 flex-1">
        <div className="flex min-w-0 flex-1 flex-col gap-[10px] overflow-hidden pt-[10px] font-['Noto_Sans',sans-serif] text-[15px]">
          <div className="flex h-7 shrink-0 items-center rounded-t bg-[#333333] pt-px pr-7 pl-[3px]">
            <MdFilterAlt size={18} className="mb-[6px]" />
            <span className="flex-1 pt-[3px]">Generell</span>
            <CheckBox label="Generell" />
          </div>
          <div className="flex h-7 shrink-0 items-center rounded-t bg-[#333333] pt-px pr-7 pl-[2px]">
            <span className="flex-1">Sichtbarkeit</span>
            <CheckBox label="Sichtbarkeit" />
          </div>

          <section className="shrink-0 rounded bg-[#333333] pr-[3px]">
            <div className="flex h-[30px] items-center pr-px pl-[2px] font-bold">
              <h3 className="flex-1">Allgemein</h3>
              <CheckBox label="Allgemein" checked />
              <IconButton label="Allgemein zuklappen" className="ml-1"><MdExpandLess size={20} /></IconButton>
            </div>
            {general.map((field) => (
              <FieldRow key={field.label} field={field} labelWidth="w-[197px]" />
            ))}
          </section>

          <section className="shrink-0 rounded bg-[#333333] pr-[3px] pb-4">
            <div className="flex h-[30px] items-center pr-px pl-[2px] font-bold">
              <h3 className="flex-1">Schalter oder Knopf [1]</h3>
              <IconButton label="Schalter löschen" className="mr-6"><MdDelete size={24} /></IconButton>
              <IconButton label="Schalter hinzufügen" className="mr-[2px]"><MdAdd size={24} /></IconButton>
              <CheckBox label="Schalter oder Knopf" checked />
              <IconButton label="Schalter zuklappen" className="ml-1"><MdExpandLess size={20} /></IconButton>
            </div>
            {button.map((field) => (
              <FieldRow key={field.label} field={field} labelWidth="w-[283px]" />
            ))}
          </section>
        </div>
        <div className="w-[5px] shrink-0 bg-[#c8c8c8]">
          <div className="h-[529px] rounded-b-sm bg-[#545454]" />
        </div>
      </div>
    </aside>
  );
}

export default function App() {
  return (
    <div className="flex h-screen flex-col overflow-hidden bg-[#121212] font-['Roboto',sans-serif] text-white">
      <Toolbar />
      <div className="flex min-h-0 flex-1">
        <Palette />
        <Splitter />
        <Editor />
        <Splitter />
        <Attributes />
      </div>
    </div>
  );
}
